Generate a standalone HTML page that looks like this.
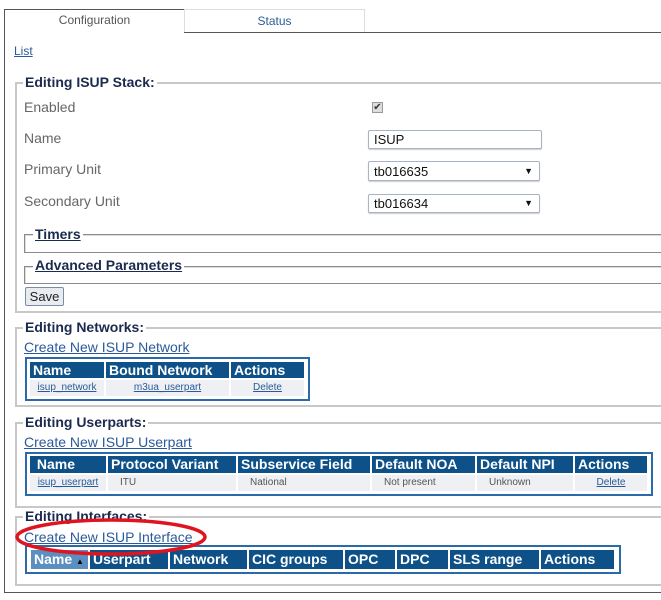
<!DOCTYPE html>
<html><head><meta charset="utf-8"><style>
body{margin:0;width:661px;height:600px;background:#fff;position:relative;overflow:hidden;font-family:"Liberation Sans",Arial,sans-serif;}
div,span,a{position:absolute;box-sizing:border-box;}
.fs{border:2px solid #c8c8c8;border-right:none;}
.fs2{border:1px solid #8a8a8a;border-right:none;box-shadow:inset 1px 1px 0 #ddd;}
.lg{background:#fff;font-weight:bold;font-size:14px;color:#1b2a4e;padding:0 2px;line-height:16px;white-space:nowrap;}
.lbl{font-size:14px;color:#666;}
a,.u{color:#2a5a9a;text-decoration:underline;white-space:nowrap;}
.th{background:#0e5188;color:#fff;font-weight:bold;font-size:14px;line-height:16px;padding-left:3px;white-space:nowrap;overflow:hidden;}
.td{background:#eef0f3;font-size:10px;color:#555;line-height:15px;text-align:center;white-space:nowrap;}
.tb{border:2px solid #2a6aa8;background:#fff;}
.sel{border:1px solid #a9b4c2;border-radius:2px;background:#fff;font-size:13px;padding-left:5px;line-height:17px;color:#111;box-shadow:0 1px 1px #ccc;}
</style></head><body>
<!-- tabs -->
<div style="left:4px;top:9px;width:181px;height:24px;border:1px solid #555;border-bottom:none;background:#fff;font-size:12px;color:#555;text-align:center;line-height:21px;">Configuration</div>
<div style="left:184px;top:9px;width:181px;height:23px;border:1px solid #ddd;border-bottom:none;font-size:12px;color:#2b5d94;text-align:center;line-height:22px;">Status</div>
<div style="left:184px;top:32px;width:477px;height:1px;background:#555;"></div>
<div style="left:4px;top:32px;width:1px;height:561px;background:#555;"></div>
<div style="left:4px;top:592px;width:657px;height:1px;background:#555;"></div>
<a style="left:14px;top:44px;font-size:12px;">List</a>

<!-- stack -->
<div class="fs" style="left:15px;top:82px;width:660px;height:231px;"></div>
<span class="lg" style="left:23px;top:74px;">Editing ISUP Stack:</span>
<span class="lbl" style="left:24px;top:99px;">Enabled</span>
<div style="left:372px;top:102px;width:11px;height:11px;border:1px solid #999;background:#ddd;font-size:10px;line-height:9px;text-align:center;color:#333;">✔</div>
<span class="lbl" style="left:24px;top:130px;">Name</span>
<div class="sel" style="left:368px;top:130px;width:174px;height:19px;">ISUP</div>
<span class="lbl" style="left:24px;top:161px;">Primary Unit</span>
<div class="sel" style="left:368px;top:161px;width:172px;height:20px;line-height:19px;">tb016635<span style="right:6px;top:0;font-size:9px;">▼</span></div>
<span class="lbl" style="left:24px;top:193px;">Secondary Unit</span>
<div class="sel" style="left:368px;top:194px;width:172px;height:19px;">tb016634<span style="right:6px;top:0;font-size:9px;">▼</span></div>
<div class="fs2" style="left:24px;top:234px;width:640px;height:19px;"></div>
<span class="lg u" style="left:33px;top:226px;color:#1b2a4e;">Timers</span>
<div class="fs2" style="left:24px;top:266px;width:640px;height:18px;"></div>
<span class="lg u" style="left:33px;top:257px;color:#1b2a4e;">Advanced Parameters</span>
<div style="left:25px;top:287px;width:39px;height:19px;border:1px solid #7a8ca5;border-radius:2px;background:#e8ebef;font-size:13px;text-align:center;line-height:17px;color:#222;">Save</div>

<!-- networks -->
<div class="fs" style="left:15px;top:327px;width:660px;height:80px;"></div>
<span class="lg" style="left:23px;top:319px;">Editing Networks:</span>
<a style="left:24px;top:339px;font-size:14px;">Create New ISUP Network</a>
<div class="tb" style="left:25px;top:357px;width:285px;height:44px;"></div>
<div class="th" style="left:30px;top:362px;width:74px;height:16px;">Name</div>
<div class="th" style="left:106px;top:362px;width:123px;height:16px;">Bound Network</div>
<div class="th" style="left:231px;top:362px;width:73px;height:16px;">Actions</div>
<div class="td" style="left:30px;top:380px;width:74px;height:16px;"><span class="u" style="position:static;">isup_network</span></div>
<div class="td" style="left:106px;top:380px;width:123px;height:16px;"><span class="u" style="position:static;">m3ua_userpart</span></div>
<div class="td" style="left:231px;top:380px;width:73px;height:16px;"><span class="u" style="position:static;">Delete</span></div>

<!-- userparts -->
<div class="fs" style="left:15px;top:422px;width:660px;height:86px;"></div>
<span class="lg" style="left:23px;top:414px;">Editing Userparts:</span>
<a style="left:24px;top:434px;font-size:14px;">Create New ISUP Userpart</a>
<div class="tb" style="left:25px;top:452px;width:628px;height:44px;"></div>
<div class="th" style="left:30px;top:456px;width:76px;height:17px;">&nbsp;Name</div>
<div class="th" style="left:108px;top:456px;width:128px;height:17px;">Protocol Variant</div>
<div class="th" style="left:238px;top:456px;width:132px;height:17px;">Subservice Field</div>
<div class="th" style="left:372px;top:456px;width:103px;height:17px;">Default NOA</div>
<div class="th" style="left:477px;top:456px;width:96px;height:17px;">Default NPI</div>
<div class="th" style="left:575px;top:456px;width:72px;height:17px;">Actions</div>
<div class="td" style="left:30px;top:475px;width:76px;height:16px;"><span class="u" style="position:static;">isup_userpart</span></div>
<div class="td" style="left:108px;top:475px;width:128px;height:16px;text-align:left;padding-left:12px;">ITU</div>
<div class="td" style="left:238px;top:475px;width:132px;height:16px;text-align:left;padding-left:12px;">National</div>
<div class="td" style="left:372px;top:475px;width:103px;height:16px;text-align:left;padding-left:12px;">Not present</div>
<div class="td" style="left:477px;top:475px;width:96px;height:16px;text-align:left;padding-left:12px;">Unknown</div>
<div class="td" style="left:575px;top:475px;width:72px;height:16px;"><span class="u" style="position:static;">Delete</span></div>

<!-- interfaces -->
<div class="fs" style="left:15px;top:516px;width:660px;height:70px;"></div>
<span class="lg" style="left:23px;top:508px;">Editing Interfaces:</span>
<a style="left:24px;top:529px;font-size:14px;">Create New ISUP Interface</a>
<div class="tb" style="left:25px;top:545px;width:596px;height:29px;"></div>
<div class="th" style="left:31px;top:550px;width:57px;height:19px;line-height:19px;background:#5b8fc0;">Name <span style="position:static;font-size:8px;color:#000;">▲</span></div>
<div class="th" style="left:90px;top:550px;width:78px;height:19px;line-height:19px;">Userpart</div>
<div class="th" style="left:170px;top:550px;width:77px;height:19px;line-height:19px;">Network</div>
<div class="th" style="left:249px;top:550px;width:94px;height:19px;line-height:19px;">CIC groups</div>
<div class="th" style="left:345px;top:550px;width:50px;height:19px;line-height:19px;">OPC</div>
<div class="th" style="left:397px;top:550px;width:51px;height:19px;line-height:19px;">DPC</div>
<div class="th" style="left:450px;top:550px;width:89px;height:19px;line-height:19px;">SLS range</div>
<div class="th" style="left:541px;top:550px;width:73px;height:19px;line-height:19px;">Actions</div>

<svg style="position:absolute;left:0;top:0;" width="661" height="600"><ellipse cx="111" cy="537" rx="94" ry="17" fill="none" stroke="#e0141e" stroke-width="3.5"/></svg>
</body></html>
